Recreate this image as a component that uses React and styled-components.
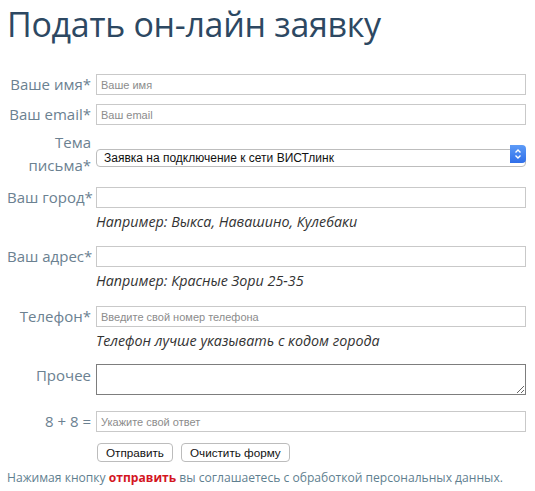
import React from "react";
import styled, { createGlobalStyle } from "styled-components";

const GlobalStyle = createGlobalStyle`
  body {
    margin: 0;
    background: #fff;
    font-family: "Open Sans", "DejaVu Sans", sans-serif;
  }
`;

const Page = styled.div`
  padding: 0 9px 0 7px;
  width: 535px;
  box-sizing: border-box;
`;

const Title = styled.h1`
  margin: 0;
  padding-top: 1px;
  font-family: "Open Sans", sans-serif;
  font-weight: 400;
  font-size: 34px;
  line-height: 46px;
  letter-spacing: -0.3px;
  color: #2d4862;
`;

const Form = styled.form`
  margin-top: 26px;
  display: flex;
  flex-direction: column;
`;

const Row = styled.div`
  display: grid;
  grid-template-columns: 84px 1fr;
  column-gap: 5px;
  align-items: center;
  margin-bottom: ${(p) => p.$gap ?? 9}px;
`;

const Label = styled.label`
  text-align: right;
  font-size: 15px;
  line-height: 23px;
  color: #6b8191;
  white-space: ${(p) => (p.$wrap ? "normal" : "nowrap")};
  align-self: ${(p) => (p.$top ? "start" : "center")};
`;

const Input = styled.input`
  box-sizing: border-box;
  width: 100%;
  height: 21px;
  margin: 0;
  padding: 0 4px;
  border: 1px solid #c9c9c9;
  font-family: "Liberation Sans", Arial, sans-serif;
  font-size: 11px;
  color: #333;
  &::placeholder {
    color: #8c8c8c;
  }
`;

const Area = styled.textarea`
  box-sizing: border-box;
  width: 100%;
  height: 31px;
  margin: 0;
  border: 1px solid #7d7d7d;
  font-family: "Liberation Sans", Arial, sans-serif;
  font-size: 11px;
`;

const SelectBox = styled.div`
  position: relative;
  height: 18px;
`;

const Select = styled.select`
  box-sizing: border-box;
  appearance: none;
  width: 100%;
  height: 18px;
  margin: 0;
  padding: 0 22px 0 7px;
  border: 1px solid #bdbdbd;
  border-radius: 4px;
  background: #fff;
  font-family: "Liberation Sans", Arial, sans-serif;
  font-size: 12px;
  color: #111;
`;

const Arrow = styled.span`
  position: absolute;
  top: 0;
  right: 0;
  width: 16px;
  height: 18px;
  border-radius: 0 4px 4px 0;
  background: linear-gradient(#5d9bf7, #2f6ee9);
  display: flex;
  align-items: center;
  justify-content: center;
  pointer-events: none;
`;

const Hint = styled.div`
  grid-column: 2;
  font-style: italic;
  font-size: 14.3px;
  line-height: 20px;
  color: #333;
  margin-top: 3px;
`;

const Buttons = styled.div`
  grid-column: 2;
  display: flex;
  gap: 8px;
  padding-left: 1px;
`;

const Button = styled.button`
  height: 19px;
  padding: 0 8px;
  border: 1px solid #bcbcbc;
  border-radius: 4px;
  background: #fff;
  font-family: "Liberation Sans", Arial, sans-serif;
  font-size: 11.7px;
  color: #111;
`;

const Note = styled.p`
  margin: 7px 0 0;
  font-size: 12.1px;
  line-height: 18px;
  color: #5f7f90;
  white-space: nowrap;
`;

const Red = styled.b`
  color: #d4161f;
  font-weight: 700;
`;

export default function App() {
  return (
    <Page>
      <GlobalStyle />
      <Title>Подать он-лайн заявку</Title>
      <Form onSubmit={(e) => e.preventDefault()}>
        <Row $gap={7}>
          <Label>Ваше имя*</Label>
          <Input placeholder="Ваше имя" />
        </Row>
        <Row $gap={5}>
          <Label>Ваш email*</Label>
          <Input placeholder="Ваш email" />
        </Row>
        <Row $gap={9}>
          <Label $wrap>Тема письма*</Label>
          <SelectBox>
            <Select defaultValue="a">
              <option value="a">Заявка на подключение к сети ВИСТлинк</option>
            </Select>
            <Arrow>
              <svg width="8" height="12" viewBox="0 0 8 12">
                <path d="M1.5 4.5 L4 2 L6.5 4.5 M1.5 7.5 L4 10 L6.5 7.5" fill="none" stroke="#fff" strokeWidth="1.4" />
              </svg>
            </Arrow>
          </SelectBox>
        </Row>
        <Row $gap={13}>
          <Label>Ваш город*</Label>
          <Input />
          <Hint>Например: Выкса, Навашино, Кулебаки</Hint>
        </Row>
        <Row $gap={14}>
          <Label>Ваш адрес*</Label>
          <Input />
          <Hint>Например: Красные Зори 25-35</Hint>
        </Row>
        <Row $gap={13}>
          <Label>Телефон*</Label>
          <Input placeholder="Введите свой номер телефона" />
          <Hint>Телефон лучше указывать с кодом города</Hint>
        </Row>
        <Row $gap={15}>
          <Label $top>Прочее</Label>
          <Area />
        </Row>
        <Row $gap={10}>
          <Label>8 + 8 =</Label>
          <Input placeholder="Укажите свой ответ" />
        </Row>
        <Row $gap={0}>
          <Buttons>
            <Button type="submit">Отправить</Button>
            <Button type="reset">Очистить форму</Button>
          </Buttons>
        </Row>
      </Form>
      <Note>
        Нажимая кнопку <Red>отправить</Red> вы соглашаетесь с обработкой персональных данных.
      </Note>
    </Page>
  );
}
